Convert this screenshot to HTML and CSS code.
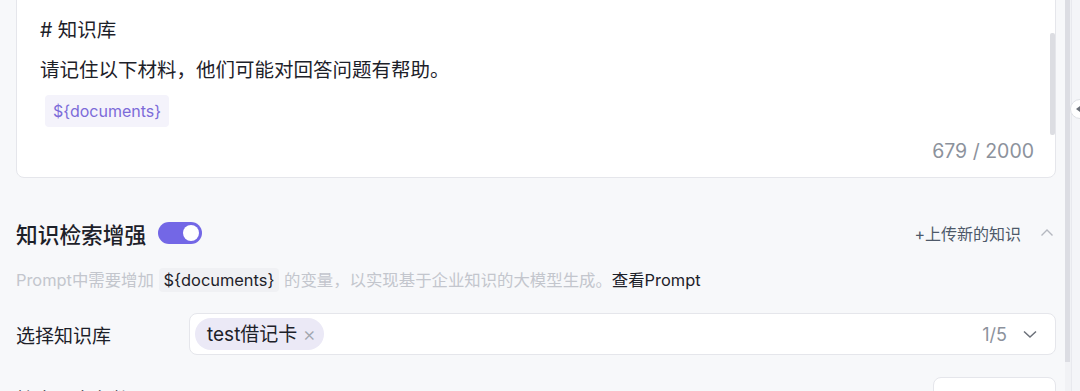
FILE: index.html
```html
<!DOCTYPE html>
<html lang="zh-CN">
<head>
  <meta charset="UTF-8">
  <title>知识库配置</title>
  <link rel="stylesheet" href="styles.css">
</head>
<body>
  <div class="layout">

    <!-- Main settings column -->
    <div class="main">

      <!-- Prompt editor -->
      <div class="prompt-card">
        <p class="prompt-line"># 知识库</p>
        <p class="prompt-line">请记住以下材料，他们可能对回答问题有帮助。</p>
        <span class="var-chip">${documents}</span>
        <div class="counter">679 / 2000</div>
        <div class="card-scroll"></div>
      </div>

      <!-- Knowledge retrieval section -->
      <div class="section-head">
        <div class="section-title">
          <span>知识检索增强</span>
          <span class="switch"><span class="knob"></span></span>
        </div>
        <div class="section-actions">
          <span class="upload">+上传新的知识</span>
          <svg class="chev" width="16" height="16" viewBox="0 0 16 16">
            <path d="M2.5 10.5 L8 5 L13.5 10.5" fill="none" stroke="#b4b8c0" stroke-width="1.4"/>
          </svg>
        </div>
      </div>

      <div class="section-desc">
        Prompt中需要增加 <code class="code-chip">${documents}</code> 的变量，以实现基于企业知识的大模型生成。<a class="desc-link">查看Prompt</a>
      </div>

      <div class="form-row">
        <label class="form-label">选择知识库</label>
        <div class="select">
          <span class="tag">test借记卡 <span class="tag-close">×</span></span>
          <span class="select-count">1/5</span>
          <svg class="chev" width="18" height="18" viewBox="0 0 18 18">
            <path d="M3 6.5 L9 12 L15 6.5" fill="none" stroke="#6b7079" stroke-width="1.5"/>
          </svg>
        </div>
      </div>

      <div class="form-row next-row">
        <label class="form-label">检索最大条数</label>
        <div class="small-input"></div>
      </div>
    </div>

    <!-- Page scrollbar -->
    <div class="page-scroll">
      <div class="page-thumb"></div>
    </div>

    <!-- Collapsed side panel -->
    <div class="side">
      <div class="side-toggle">
        <svg width="8" height="8" viewBox="0 0 8 8"><path d="M6 1 L2 4 L6 7 Z" fill="#6b7079"/></svg>
      </div>
    </div>
  </div>
</body>
</html>
```

FILE: styles.css
```css
/* Global */
body {
  margin: 0;
  padding: 0;
  background-color: #f7f8fa;
  font-family: Inter, "Noto Sans CJK SC", sans-serif;
  color: #1d2129;
  overflow: hidden;
}

.layout {
  display: flex;
  height: 391px;
}

.main {
  box-sizing: border-box;
  width: 1064px;
  flex-shrink: 0;
  padding: 0 8px 0 16px;
  margin-top: -10px;
}

/* Prompt card */
.prompt-card {
  position: relative;
  background-color: #fff;
  border: 1px solid #e5e6eb;
  border-radius: 8px;
  padding: 25px 21px 14px 23px;
  display: flex;
  flex-direction: column;
  align-items: flex-start;
}

.prompt-line {
  margin: 0 0 12px;
  font-size: 19.5px;
  line-height: 28px;
  color: #1d2129;
}

.var-chip {
  margin: -1px 0 0 5px;
  padding: 0 8px;
  height: 32px;
  line-height: 32px;
  font-size: 16px;
  color: #7c6bd9;
  background-color: #f4f3fb;
  border-radius: 4px;
}

.counter {
  align-self: flex-end;
  margin-top: 12px;
  font-size: 19.5px;
  line-height: 24px;
  color: #8c929c;
}

.card-scroll {
  position: absolute;
  right: 0;
  top: 42px;
  width: 5px;
  height: 102px;
  background-color: #dcdde2;
  border-radius: 2px;
}

/* Section header */
.section-head {
  display: flex;
  justify-content: space-between;
  align-items: center;
  height: 32px;
  margin-top: 39px;
}

.section-title {
  display: flex;
  align-items: center;
  gap: 12px;
  font-size: 21.7px;
  font-weight: 500;
  color: #1d2129;
}

.switch {
  position: relative;
  width: 44px;
  height: 22px;
  border-radius: 11px;
  background-color: #7367e6;
}

.knob {
  position: absolute;
  right: 3px;
  top: 3px;
  width: 16px;
  height: 16px;
  border-radius: 50%;
  background-color: #fff;
}

.section-actions {
  display: flex;
  align-items: center;
  gap: 18px;
  padding-right: 1px;
}

.upload {
  font-size: 16px;
  color: #4e5969;
}

.section-desc {
  margin-top: 18px;
  font-size: 16.4px;
  line-height: 26px;
  color: #c3c6cd;
}

.code-chip {
  font-family: Inter, "Noto Sans CJK SC", sans-serif;
  font-size: 16.4px;
  color: #1d2129;
  background-color: #f0f1f4;
  border-radius: 4px;
  padding: 2px 5px;
}

.desc-link {
  color: #1d2129;
  cursor: pointer;
}

/* Form rows */
.form-row {
  display: flex;
  align-items: center;
  margin-top: 20px;
}

.form-label {
  width: 173px;
  flex-shrink: 0;
  font-size: 19px;
  color: #1d2129;
}

.select {
  flex: 1;
  display: flex;
  align-items: center;
  height: 40px;
  padding: 0 16px 0 5px;
  background-color: #fff;
  border: 1px solid #e5e6eb;
  border-radius: 8px;
}

.tag {
  height: 32px;
  line-height: 32px;
  padding: 0 8px 0 12px;
  border-radius: 16px;
  background-color: #ebe9f6;
  font-size: 19px;
  color: #1d2129;
}

.tag-close {
  color: #a0a5ae;
  font-size: 20px;
  font-weight: 300;
}

.select-count {
  margin-left: auto;
  margin-right: 14px;
  font-size: 18px;
  color: #8c929c;
}

.next-row {
  margin-top: 22px;
  align-items: flex-start;
}

.next-row .form-label {
  flex: 1;
  padding-top: 8px;
}

.small-input {
  width: 121px;
  height: 40px;
  background-color: #fff;
  border: 1px solid #e5e6eb;
  border-radius: 8px;
}

/* Right edge */
.page-scroll {
  width: 6px;
  margin-left: 1px;
  background-color: #f1f2f5;
}

.page-thumb {
  width: 5px;
  height: 362px;
  background-color: #dcdde3;
}

.side {
  position: relative;
  flex: 1;
  background-color: #f4f5f8;
  border-left: 1px solid #e8e9ee;
}

.side-toggle {
  position: absolute;
  left: -2px;
  top: 99px;
  width: 20px;
  height: 20px;
  border-radius: 50%;
  background-color: #fff;
  border: 1px solid #dfe1e6;
  display: flex;
  align-items: center;
  justify-content: flex-start;
  padding-left: 3px;
  box-sizing: border-box;
}
```
